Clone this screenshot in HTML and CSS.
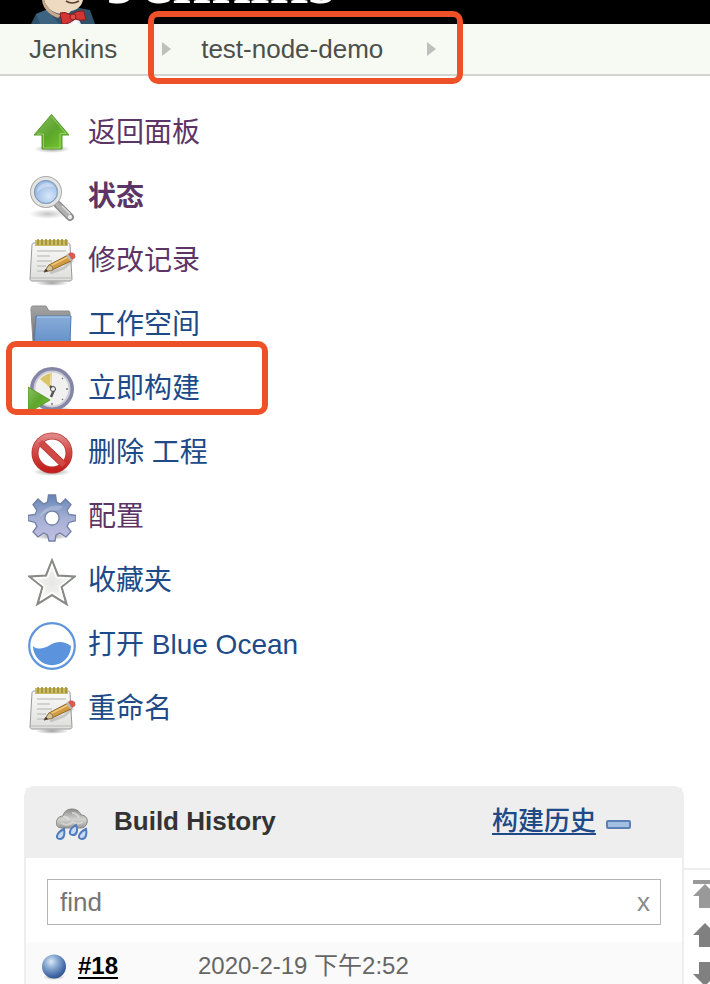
FILE: index.html
```html
<!DOCTYPE html>
<html lang="zh-CN">
<head>
<meta charset="utf-8">
<title>test-node-demo [Jenkins]</title>
<link rel="stylesheet" href="styles.css">
</head>
<body>
<svg class="defs" width="0" height="0" aria-hidden="true">
  <defs>
    <linearGradient id="green" x1="0" y1="0" x2="1" y2="1"><stop offset="0" stop-color="#8cc063"/><stop offset=".5" stop-color="#5da52c"/><stop offset="1" stop-color="#75cf2a"/></linearGradient>
    <radialGradient id="shade"><stop offset="0" stop-color="#000" stop-opacity=".38"/><stop offset="1" stop-color="#000" stop-opacity="0"/></radialGradient>
    <radialGradient id="lens" cx=".6" cy=".65"><stop offset="0" stop-color="#d6e7fa"/><stop offset="1" stop-color="#9dbce3"/></radialGradient>
    <linearGradient id="paper" x1="0" y1="0" x2="0" y2="1"><stop offset="0" stop-color="#fafafa"/><stop offset="1" stop-color="#dededc"/></linearGradient>
    <linearGradient id="folder" x1="0" y1="0" x2="0" y2="1"><stop offset="0" stop-color="#87acd9"/><stop offset="1" stop-color="#648fc7"/></linearGradient>
    <linearGradient id="folderback" x1="0" y1="0" x2="0" y2="1"><stop offset="0" stop-color="#a5a5a5"/><stop offset="1" stop-color="#6d6d6d"/></linearGradient>
    <linearGradient id="red" x1="0" y1="0" x2="0" y2="1"><stop offset="0" stop-color="#df8585"/><stop offset=".45" stop-color="#d04a47"/><stop offset="1" stop-color="#c31f1c"/></linearGradient>
    <linearGradient id="gear" x1="0" y1="0" x2="0" y2="1"><stop offset="0" stop-color="#6483b5"/><stop offset=".5" stop-color="#a4afd3"/><stop offset="1" stop-color="#c3c1e4"/></linearGradient>
    <radialGradient id="star"><stop offset="0" stop-color="#e6e6e4"/><stop offset="1" stop-color="#fbfbfb"/></radialGradient>
    <linearGradient id="cloud" x1="0" y1="0" x2="0" y2="1"><stop offset="0" stop-color="#8d8e8b"/><stop offset=".55" stop-color="#d2d3d0"/><stop offset="1" stop-color="#999a97"/></linearGradient>
    <radialGradient id="ball" cx=".38" cy=".3" r=".72"><stop offset="0" stop-color="#dce9f4"/><stop offset=".35" stop-color="#8fafd5"/><stop offset=".8" stop-color="#466da9"/><stop offset="1" stop-color="#30558f"/></radialGradient>
    <symbol id="notepad" viewBox="0 0 48 48">
      <ellipse cx="24" cy="45" rx="17" ry="3" fill="url(#shade)"/>
      <path d="M6 5h34c1 0 2 1 2 2l2 34c0 1-1 2-2 2H4c-1 0-2-1-2-2L4 7c0-1 1-2 2-2z" fill="url(#paper)" stroke="#989896"/>
      <path d="M3 40h40" stroke="#b9b9b7"/>
      <path d="M7 2h33v6H7z" fill="#c9ba64"/>
      <path d="M10 1v6M14 1v6M18 1v6M22 1v6M26 1v6M30 1v6M34 1v6M38 1v6" stroke="#9c8c32" stroke-width="1.5"/>
      <path d="M9 13h29M9 18h13M9 23h15M9 28h9M9 33h7" stroke="#c6c6c4" stroke-width="1.6"/>
      <path d="M22 35l14-5 9-8" stroke="#888" stroke-opacity=".35" stroke-width="3" fill="none"/>
      <path d="M16 34l5-7 19-10 3 6-19 9z" fill="#d29a42" stroke="#8c6426"/>
      <path d="M22 28l18-9" stroke="#edc77a" stroke-width="1.6"/>
      <path d="M16 34l5-7 3 1 1 4z" fill="#d9c49a" stroke="#806038" stroke-width=".7"/>
      <path d="M16 34l2-3 2 2z" fill="#333"/>
      <path d="M38 17l2-1 4 6-2 1z" fill="#b9bdc2"/>
      <path d="M40 16c3-3 9-1 7 4l-3 2z" fill="#d55c4e"/>
    </symbol>
    <symbol id="arrow" viewBox="0 0 24 24"><path d="M12 0L24 12h-6v12H6V12H0z"/></symbol>
  </defs>
</svg>

<div class="page">
  <header class="header">
    <a class="logo" href="#">
      <svg class="logo-head" viewBox="0 0 68 24" aria-hidden="true">
        <path d="M1 24L6 14 20 8l14 8 10-9 16 3 5 14z" fill="#2f526a"/>
        <path d="M6 14l11-4 12 14H10z" fill="#3c6480"/>
        <path d="M14 0h39c-1 5-5 10-12 11-3 4-7 5-11 3C21 12 16 7 14 0z" fill="#eed9c1"/>
        <path d="M14 0c3 8 8 13 17 15l-3 3C18 14 13 8 12 0z" fill="#c8a98b"/>
        <path d="M36 1q6 4 13 0" fill="none" stroke="#5a3b30" stroke-width="1.6"/>
        <path d="M38 20l5-3 6 3 2 4H36z" fill="#e9edf0"/>
        <path d="M30 13q5-2 11 2 6-5 13-4l2 9q-6 1-11-1-7 6-13 5z" fill="#cf3634" stroke="#7f2020"/>
        <circle cx="43" cy="17" r="3" fill="#e04b45" stroke="#7f2020"/>
        <path d="M43 22l4-1 1 3h-6z" fill="#fff"/>
      </svg>
      <span class="logo-text">Jenkins</span>
    </a>
  </header>

  <nav class="breadcrumbs" aria-label="Breadcrumb">
    <a class="crumb" href="#">Jenkins</a>
    <span class="crumb-group">
      <svg class="sep" viewBox="0 0 9 16" aria-hidden="true"><path d="M0 1l9 7-9 7z" fill="#bfc0bd"/></svg>
      <a class="crumb" href="#">test-node-demo</a>
      <svg class="sep sep-last" viewBox="0 0 9 16" aria-hidden="true"><path d="M0 1l9 7-9 7z" fill="#bfc0bd"/></svg>
    </span>
  </nav>

  <ul class="tasks">
    <li class="task"><a class="visited" href="#">
      <svg class="icon" viewBox="0 0 48 48" aria-hidden="true"><ellipse cx="24" cy="39" rx="18" ry="4" fill="url(#shade)"/><path d="M23.500 4.500L41 25h-7v14H14V25H6z" fill="url(#green)" stroke="#559b2b"/><path d="M23.500 6.500L38 23.500h-6V38H15.500V24H9" fill="none" stroke="#b7e08e" stroke-opacity=".6"/></svg>
      <span>返回面板</span></a></li>
    <li class="task"><a class="visited current" href="#">
      <svg class="icon" viewBox="0 0 48 48" aria-hidden="true"><ellipse cx="20" cy="40" rx="19" ry="5" fill="url(#shade)" opacity=".6"/><path d="M30 31l12 12" stroke="#8a8a8a" stroke-width="8" stroke-linecap="round"/><path d="M30 31l12 12" stroke="#b0b0b0" stroke-width="5" stroke-linecap="round"/><path d="M34 32l8 8" stroke="#ddd" stroke-width="1.500"/><circle cx="42" cy="43" r="2" fill="#eee"/><circle cx="18" cy="18" r="13.500" fill="url(#lens)" stroke="#aaa" stroke-width="5"/><circle cx="18" cy="18" r="13.500" fill="none" stroke="#e5e5e3" stroke-width="3"/><circle cx="18" cy="18" r="11.500" fill="none" stroke="#789fce"/><path d="M9 18c0-9 13-13 17-5-8-1-13 1-17 5z" fill="#fff" opacity=".35"/></svg>
      <span>状态</span></a></li>
    <li class="task"><a class="visited" href="#"><svg class="icon" aria-hidden="true"><use href="#notepad"/></svg><span>修改记录</span></a></li>
    <li class="task"><a href="#">
      <svg class="icon" viewBox="0 0 48 48" aria-hidden="true"><path d="M5 4h13l3 5h19c2 0 2 1 2 3v28H5L3 8c0-2 0-4 2-4z" fill="url(#folderback)" stroke="#8b8b89"/><path d="M8 14h35l-1 26c0 2-1 3-3 3H6z" fill="url(#folder)" stroke="#4f7cb5"/><path d="M9 15h33" stroke="#b5cdea"/></svg>
      <span>工作空间</span></a></li>
    <li class="task highlighted"><a href="#">
      <svg class="icon" viewBox="0 0 48 48" aria-hidden="true"><ellipse cx="27" cy="44" rx="19" ry="4" fill="url(#shade)"/><circle cx="24" cy="23" r="20" fill="#f1f1ef" stroke="#8585a6" stroke-width="4"/><circle cx="24" cy="23" r="17.500" fill="none" stroke="#cbcbd8" stroke-width="2"/><path d="M23 22L12 13q5-5 12-6z" fill="#d9c46a"/><path d="M13 14l9 8 1-14" fill="none" stroke="#ede3ae"/><path d="M22 20l4 4-3 7" fill="none" stroke="#555" stroke-width="2.500"/><circle cx="25" cy="23" r="2.500" fill="#eee" stroke="#444"/><path d="M38 23h2M24 37v2M34 13l1-1M34 33l1 1" stroke="#777" stroke-width="1.500"/><path d="M0 21l22 13L0 47z" fill="url(#green)" stroke="#559b2b"/></svg>
      <span>立即构建</span></a></li>
    <li class="task"><a href="#">
      <svg class="icon" viewBox="0 0 48 48" aria-hidden="true"><ellipse cx="24" cy="42" rx="19" ry="4" fill="url(#shade)"/><circle cx="24" cy="23" r="17" fill="none" stroke="#b93330" stroke-width="7"/><path d="M12 12l24 23" stroke="#b93330" stroke-width="7"/><circle cx="24" cy="23" r="17" fill="none" stroke="url(#red)" stroke-width="5.500"/><path d="M12 12l24 23" stroke="#cf4a47" stroke-width="5.500"/></svg>
      <span>删除 工程</span></a></li>
    <li class="task"><a class="visited" href="#">
      <svg class="icon" viewBox="0 0 48 48" aria-hidden="true"><ellipse cx="24" cy="42" rx="18" ry="4" fill="url(#shade)"/><path fill-rule="evenodd" d="M20.500 1h7l1 7 4 2 5-5 5.500 5.500-4 6 2 4 7 1v5l-7 2-2 4 4 5-5 5.500-6-4-4 2-1 6h-6l-1.500-6-4-2-5.500 4-5-5 4-5.500-2-4-7-2v-5l7-1 2-4-4-6 5-5.500 5.500 5 4-2zM24 17a7 7 0 1 0 .01 0z" fill="url(#gear)" stroke="#6f7fa6" stroke-width="1.300"/><path d="M11 24c3-11 15-14 24-12-4 8-16 1-24 12z" fill="#fff" opacity=".22"/></svg>
      <span>配置</span></a></li>
    <li class="task"><a href="#">
      <svg class="icon" viewBox="0 0 48 48" aria-hidden="true"><path d="M24 2.500l6 15 16.500 1-13 10.500 5 17L24 37 9.500 46l5-17-13-10.500 16.500-1z" fill="url(#star)" stroke="#888a85" stroke-width="2.200"/><path d="M24 7l4.500 12.500 13 1-10 8 3.500 13L24 34.500 13 41.500l3.500-13-10-8 13-1z" fill="none" stroke="#fff" stroke-width="1.500"/></svg>
      <span>收藏夹</span></a></li>
    <li class="task"><a href="#">
      <svg class="icon" viewBox="0 0 48 48" aria-hidden="true"><circle cx="24" cy="24" r="22.800" fill="#fff" stroke="#5f95dc" stroke-width="2.200"/><path d="M5 24c4 4 11 3 17-1 7-4 14-4 21 1A19.200 19.200 0 0 1 24 43.200 19.200 19.200 0 0 1 5 24z" fill="#5b93dd"/></svg>
      <span>打开 Blue Ocean</span></a></li>
    <li class="task"><a href="#"><svg class="icon" aria-hidden="true"><use href="#notepad"/></svg><span>重命名</span></a></li>
  </ul>

  <div class="lower">
    <section class="history">
      <div class="history-head">
        <svg class="weather" viewBox="0 0 32 32" aria-hidden="true"><path d="M6 20c-5 0-7-4-5-8 1-3 4-4 6-4 1-5 5-7 9-7 5 0 8 3 9 6 5 0 7 4 6 8-1 3-3 5-6 5z" fill="url(#cloud)" stroke="#858683"/><path d="M7 9q4-1 6 3M16 5q5 0 7 5M5 15q7 4 12-1 5 3 10 0" fill="none" stroke="#e4e5e2" stroke-width="2" opacity=".65"/><g fill="#c6daf2" stroke="#4f7cbd" stroke-width="2"><path d="M8 21c1 5 0 10-4 10-5 0-4-6 4-10zM20 17c2 5 1 10-3 10-5 0-4-6 3-10zM30 21c1 5 0 10-4 10-5 0-4-6 4-10z"/></g></svg>
        <h2 class="history-title">Build History</h2>
        <a class="trend" href="#">构建历史</a>
        <button class="collapse" type="button" aria-label="collapse"></button>
      </div>
      <div class="search">
        <input class="search-input" type="text" placeholder="find" aria-label="find">
        <button class="clear" type="button">x</button>
      </div>
      <div class="build">
        <svg class="ball" viewBox="0 0 26 26" aria-hidden="true"><ellipse cx="13" cy="23" rx="11" ry="3" fill="url(#shade)"/><circle cx="13" cy="12.500" r="12" fill="url(#ball)"/></svg>
        <a class="build-id" href="#">#18</a>
        <span class="build-date">2020-2-19 下午2:52</span>
      </div>
    </section>
    <div class="pager">
      <button class="page-btn first" type="button" aria-label="first page"><svg viewBox="0 0 24 24" aria-hidden="true"><use href="#arrow"/></svg></button>
      <button class="page-btn" type="button" aria-label="newer"><svg viewBox="0 0 24 24" aria-hidden="true"><use href="#arrow"/></svg></button>
      <button class="page-btn older" type="button" aria-label="older"><svg viewBox="0 0 24 24" aria-hidden="true"><use href="#arrow"/></svg></button>
    </div>
  </div>
</div>
</body>
</html>
```
FILE: styles.css
```css
*, *::after { box-sizing: border-box; }

body {
  margin: 0;
  background: #fff;
  color: #333;
  font-family: "Liberation Sans", "Noto Sans CJK SC", sans-serif;
  font-size: 26px;
}

a { color: #204a87; text-decoration: none; }
button { padding: 0; border: 0; background: none; font: inherit; cursor: pointer; }
svg { display: block; flex: none; }
.defs { position: absolute; }

.page {
  display: flex;
  flex-direction: column;
  height: 100vh;
  overflow: hidden;
}

/* Header */
.header {
  flex: none;
  height: 24px;
  overflow: hidden;
  background: #000;
}
.logo { display: flex; gap: 8px; padding-left: 30px; }
.logo-head { width: 68px; height: 24px; }
.logo-text {
  margin-top: -32px;
  color: #fff;
  font-family: "Liberation Serif", serif;
  font-size: 70px;
  font-weight: bold;
  line-height: 24px;
}

/* Breadcrumbs */
.breadcrumbs {
  display: flex;
  flex: none;
  gap: 31px;
  height: 52px;
  padding-left: 29px;
  border-bottom: 2px solid #d3d4cf;
  background: #f6faf2;
}
.crumb { color: #4d4f4a; line-height: 50px; }
.crumb-group {
  position: relative;
  display: flex;
  align-items: center;
  gap: 30px;
  padding: 0 27px 0 14px;
}
.sep { width: 9px; height: 16px; }
.sep-last { margin-left: 14px; }
.crumb-group::after,
.highlighted::after {
  content: "";
  position: absolute;
  border: 6px solid #ee5128;
  border-radius: 10px;
  pointer-events: none;
}
.crumb-group::after { inset: -13px 0 -10px; }

/* Side tasks */
.tasks {
  display: flex;
  flex: none;
  flex-direction: column;
  gap: 16px;
  margin: 0;
  padding: 34px 28px 52px;
  list-style: none;
}
.task { position: relative; }
.task a {
  display: flex;
  gap: 12px;
  height: 48px;
  font-size: 28px;
  line-height: 45px;
}
.task .visited { color: #5c3566; }
.task .current { font-weight: bold; }
.icon { width: 48px; height: 48px; }
.highlighted::after {
  top: -25px;
  left: -22px;
  width: 262px;
  height: 74px;
}

/* Build history */
.lower {
  display: grid;
  grid-template-columns: minmax(0, 1fr) 26px;
  flex: 1;
  padding-left: 24px;
}
.history {
  border: 2px solid #eee;
  border-bottom: 0;
  border-radius: 10px 10px 0 0;
}
.history-head {
  display: flex;
  align-items: center;
  height: 70px;
  padding: 0 51px 4px 30px;
  background: #eee;
}
.weather { width: 32px; height: 32px; margin-top: 6px; }
.history-title { margin: 0 auto 0 26px; font-size: 26px; line-height: 36px; }
.trend {
  font-weight: 500;
  line-height: 36px;
  text-decoration: underline;
  text-decoration-thickness: 2px;
  text-underline-offset: 3px;
}
.collapse {
  width: 25px;
  height: 9px;
  margin: 6px 0 0 10px;
  border: 2px solid #5b80b5;
  border-radius: 2px;
  background: #a3bfe3;
}
.search { position: relative; padding: 21px 21px 17px; }
.search-input {
  display: block;
  width: 100%;
  height: 46px;
  padding: 0 40px 0 12px;
  border: 1px solid #b5b5b5;
  background: #fff;
  color: #333;
  font: inherit;
}
.search-input::placeholder { color: #757575; opacity: 1; }
.clear {
  position: absolute;
  top: 21px;
  right: 32px;
  color: #8a8a8a;
  line-height: 46px;
}
.build {
  display: flex;
  align-items: baseline;
  height: 50px;
  padding-left: 15px;
  background: #fafafa;
  font-size: 24px;
  line-height: 48px;
}
.ball { align-self: flex-start; width: 26px; height: 26px; margin-top: 12px; }
.build-id {
  width: 120px;
  margin-left: 11px;
  color: #000;
  font-weight: bold;
  text-decoration: underline;
  text-decoration-thickness: 2px;
  text-underline-offset: 3px;
}
.build-date { color: #666; }

/* Paging arrows */
.pager {
  display: flex;
  flex-direction: column;
  gap: 15px;
  margin-top: 82px;
  padding: 10px 0 0 9px;
  border-top: 2px solid #eee;
  overflow: hidden;
}
.page-btn { flex: none; width: 24px; }
.page-btn svg { width: 24px; height: 24px; fill: #808080; }
.first { border-top: 4px solid #999; }
.first svg { fill: #999; }
.older svg { transform: rotate(180deg); }
```
